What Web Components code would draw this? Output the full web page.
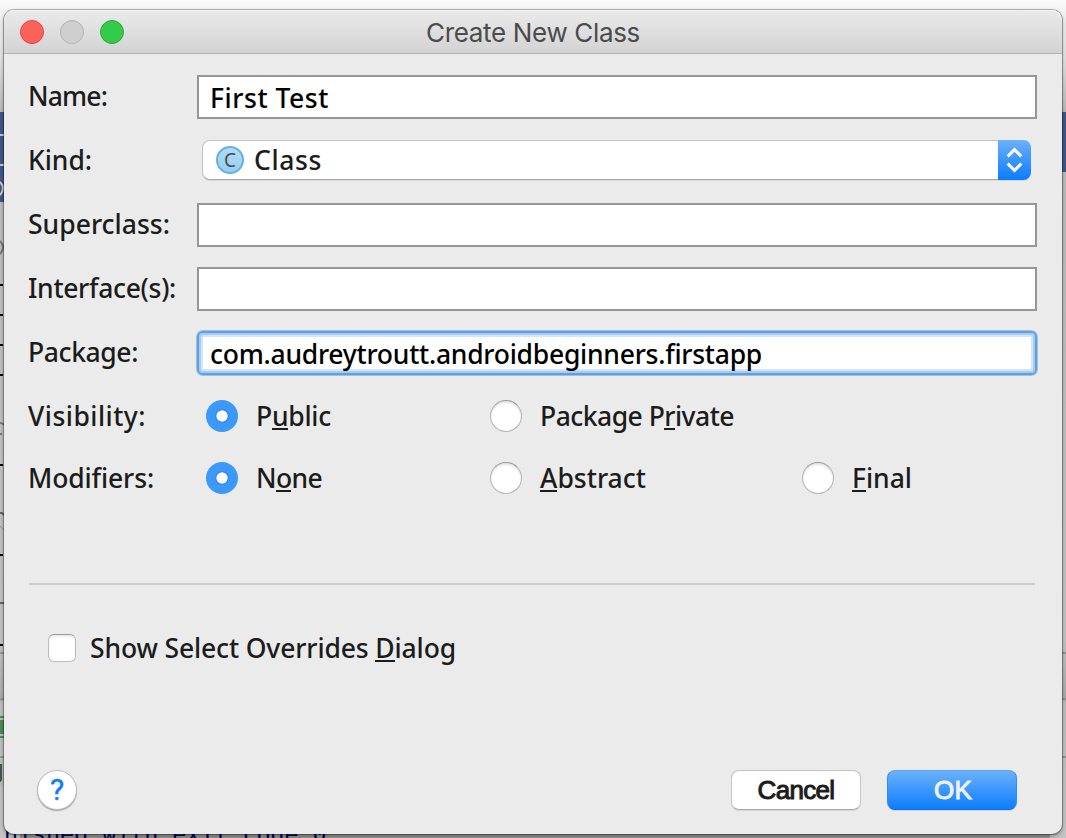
<!DOCTYPE html>
<html lang="en">
<head>
<meta charset="utf-8">
<title>Create New Class</title>
<style>
html,body{margin:0;height:100%;overflow:hidden}
body{font:500 26.5px/32px "Noto Sans","Open Sans",sans-serif;color:#1c1c1c}
</style>
</head>
<body>
<app-backdrop>
<mac-window heading="Create New Class">
  <form-row label="Name:" fit="79"><text-field><fit-text w="119">First Test</fit-text></text-field></form-row>
  <form-row label="Kind:" fit="64"><combo-box><fit-text w="68">Class</fit-text></combo-box></form-row>
  <form-row label="Superclass:" fit="142"><text-field></text-field></form-row>
  <form-row label="Interface(s):" fit="148"><text-field></text-field></form-row>
  <form-row label="Package:" fit="110"><text-field focused><fit-text w="552">com.audreytroutt.androidbeginners.firstapp</fit-text></text-field></form-row>
  <form-row label="Visibility:" fit="118" compact>
    <radio-button checked><fit-text w="75">P<u>u</u>blic</fit-text></radio-button>
    <radio-button><fit-text w="194">Package P<u>r</u>ivate</fit-text></radio-button>
  </form-row>
  <form-row label="Modifiers:" fit="126" compact>
    <radio-button checked><fit-text w="66">N<u>o</u>ne</fit-text></radio-button>
    <radio-button><fit-text w="106"><u>A</u>bstract</fit-text></radio-button>
    <radio-button><fit-text w="60"><u>F</u>inal</fit-text></radio-button>
  </form-row>
  <check-box slot="options"><fit-text w="366">Show Select Overrides <u>D</u>ialog</fit-text></check-box>
  <help-button slot="help"></help-button>
  <push-button slot="actions"><fit-text w="80">Cancel</fit-text></push-button>
  <push-button slot="actions" primary><fit-text w="38">OK</fit-text></push-button>
</mac-window>
</app-backdrop>
<script>
function define(name, template, setup) {
  customElements.define(name, class extends HTMLElement {
    connectedCallback() {
      if (this.shadowRoot) return;
      this.attachShadow({mode: 'open'}).innerHTML = template(this);
      if (setup) setup(this);
    }
  });
}

// Tracks its text so that the line has the advance width given in "w".
define('fit-text', () => `<style>
:host{display:inline-block;white-space:nowrap}
::slotted(u){text-decoration:none;box-shadow:0 2px 0 #1c1c1c;display:inline-block;height:28px;line-height:32px}
</style><slot></slot>`, el => {
  const natural = el.getBoundingClientRect().width;
  el.style.letterSpacing = (el.getAttribute('w') - natural) / el.textContent.length + 'px';
});

define('app-backdrop', () => `<style>
:host{display:block;position:relative;box-sizing:border-box;width:1066px;height:838px;padding:10px 4px 5px;overflow:hidden;
 background:linear-gradient(#fbfbfb 0,#f1f1f1 12px,#e4e4e4 55px,#b9b9b9 112px,#bcbcbc 205px,#c3c3c3 640px,#a9a9a9 700px,#bdbdbd 702px,#c4c4c4)}
svg,.console{position:absolute;left:0;top:0}
.console{left:4px;top:820px;white-space:pre;font:23.3px/28px "DejaVu Sans Mono",monospace;color:#00005a}
::slotted(*){position:relative}
</style>
<svg width="1066" height="838" fill="none">
<path fill="#3f5788" d="M0 112h4v90H0zM1062 112h4v60h-4z"/>
<path stroke="#c9c9c9" stroke-width="2" d="M0 135h4M0 165h4"/>
<path stroke="#d0ccc4" stroke-width="2" d="M0 182q6 6 0 13"/>
<path stroke="#777" stroke-width="2" d="M0 241q6 6 0 13M0 423q3 0 4 2M0 434h2"/>
<path stroke="#000" stroke-width="2" d="M0 285h3M0 315h3M0 345h3M0 375h3M0 465h3M0 555h3M0 645h3"/>
<path stroke="#666" stroke-width="2" d="M0 513h2l2 2M0 603h4"/>
<path stroke="#7fa078" d="M0 526l4 4"/>
<path stroke="#959595" stroke-width="2" d="M0 653h4M0 699h4M0 757h4M1062 653h4M1062 699h4M1062 757h4"/>
<path fill="#4f8a55" d="M0 716h4v2H0zM0 720h4v14H0zM0 736h4v2H0z"/>
<path fill="#b5c2b0" d="M0 759h4v28H0z"/><path fill="#4b505c" d="M0 764h2v16q-1 2-2 2z"/>
<path fill="#939393" d="M20 833h1030v5H20z"/>
</svg><div class="console">nished with exit code 0</div>
<slot></slot>`);

define('mac-window', el => `<style>
:host{display:flex;flex-direction:column;box-sizing:border-box;height:823.5px;background:#ebebeb;border-radius:10px;
 box-shadow:0 0 0 1px rgba(0,0,0,.27),0 2px 4px rgba(0,0,0,.35)}
header{display:grid;grid-template-columns:150px 1fr 150px;align-items:center;height:44px;box-sizing:border-box;
 border-radius:10px 10px 0 0;background:linear-gradient(#eaeaea,#d3d3d3);border-bottom:1px solid #b1b1b1;box-shadow:inset 0 1px #f4f4f4}
.lights{display:flex;gap:16px;padding-left:16px}
i{box-sizing:border-box;width:24px;height:24px;border-radius:50%;background:#fe605b;border:1px solid #e2463f}
i+i{background:#cfcfcf;border-color:#b2b2b2}
i+i+i{background:#34cb4a;border-color:#23b033}
h1{margin:0;padding-top:2px;font:400 26px/32px Inter,sans-serif;color:#4b4b4b;text-align:center}
.form{display:flex;flex-direction:column;gap:20px;padding:21px 25px 0 24px}
.rule{height:2px;margin:89px 27px 0 25px;background:#cbcbcb}
.options{padding:47px 44px 0}
footer{display:flex;align-items:center;margin-top:auto;padding:0 45px 23.5px 33px;gap:26px}
.gap{flex:1}
</style>
<header><div class="lights"><i></i><i></i><i></i></div><h1><fit-text w="214">${el.getAttribute('heading')}</fit-text></h1></header>
<div class="form"><slot></slot></div>
<div class="rule"></div>
<div class="options"><slot name="options"></slot></div>
<footer><slot name="help"></slot><span class="gap"></span><slot name="actions"></slot></footer>`);

define('form-row', el => `<style>
:host{display:grid;grid-template-columns:169px 1fr;align-items:center;height:44px}
:host([compact]){height:32px;margin-top:5px}
:host([compact]:last-of-type){margin-top:10px}
:host([compact]) .body{display:grid;grid-template-columns:284px 312px auto;padding-left:9px;justify-content:start}
.label{height:32px;padding-bottom:2px}
:host([compact]) .label{padding:0}
</style><div class="label"><fit-text w="${el.getAttribute('fit')}">${el.getAttribute('label')}</fit-text></div><div class="body"><slot></slot></div>`);

define('text-field', () => `<style>
:host{display:flex;align-items:center;box-sizing:border-box;height:44px;border:2px solid #969696;background:#fff;padding:1px 11px 0;color:#000}
:host([focused]){border:2px solid #629fe0;border-radius:6px;box-shadow:0 0 0 1px #9dc0e8,inset 0 0 0 2px #a8cbf0,inset 0 0 0 4px #d3e5f8}
</style><slot></slot>`);

define('combo-box', () => `<style>
:host{display:flex;align-items:center;box-sizing:border-box;height:40px;margin:0 6px 2px 5px;padding-left:13px;gap:10px;
 background:#fff;border:1px solid #c4c4c4;border-bottom-color:#a9a9a9;border-radius:8px;box-shadow:0 1px #d9d9d9}
.step{margin:-1px -1px -1px auto;width:33px;height:40px;border-radius:0 8px 8px 0;background:linear-gradient(#6cb1fa,#0a7cff)}
svg{display:block}
.kind{font:19px/24px "Noto Sans",sans-serif;width:28px;height:28px;box-sizing:border-box;display:grid;place-items:center;border-radius:50%;
 border:2px solid #68b0e0;background:linear-gradient(#b2dbf5,#93d0f1);color:#4d4d4d}
</style><span class="kind">C</span><slot></slot>
<div class="step"><svg width="33" height="40" fill="none" stroke="#fff" stroke-width="3"><path d="M9.7 16.3l6.8-6.6 6.8 6.6M9.7 23.7l6.8 6.6 6.8-6.6"/></svg></div>`);

define('radio-button', () => `<style>
:host{display:flex;align-items:center;gap:18px}
i{box-sizing:border-box;width:32px;height:32px;border-radius:50%;background:#fff;border:1px solid #b3b3b3;border-top-color:#979797;box-shadow:inset 0 2px 2px #e4e4e4}
:host([checked]) i{border:0;box-shadow:none;background:radial-gradient(circle at 50% 50%,#fff 5.2px,#3286e2 6px,#3b99fc 7.5px)}
</style><i></i><slot></slot>`);

define('check-box', () => `<style>
:host{display:flex;align-items:center;gap:14px}
i{box-sizing:border-box;width:28px;height:28px;border-radius:6px;background:#fff;border:1px solid #bdbdbd;border-top-color:#999;box-shadow:inset 0 2px 2px #ececec}
</style><i></i><slot></slot>`);

define('help-button', () => `<style>
:host{display:grid;place-items:center;box-sizing:border-box;width:40px;height:40px;border-radius:50%;background:#fff;border:1px solid #bdbdbd;
 box-shadow:0 1px 1px #a8a8a8;margin-top:1px;font:400 30px/38px Roboto,sans-serif;-webkit-text-stroke:.4px;color:#0a7cff}
</style>?`);

define('push-button', () => `<style>
:host{display:grid;place-items:center;box-sizing:border-box;width:130px;height:40px;border-radius:8px;background:#fff;
 border:1px solid #c4c4c4;border-bottom-color:#a9a9a9;box-shadow:0 1px #d6d6d6;font:500 26px/38px "Liberation Sans",sans-serif;-webkit-text-stroke:1px}
:host([primary]){padding-left:2px;background:linear-gradient(#6cb3fa,#0a7cff);background-origin:border-box;border-color:#5ba5f5 #2e8bf7 #0a6cf0;color:#f1f1f1}
</style><slot></slot>`);
</script>
</body>
</html>
